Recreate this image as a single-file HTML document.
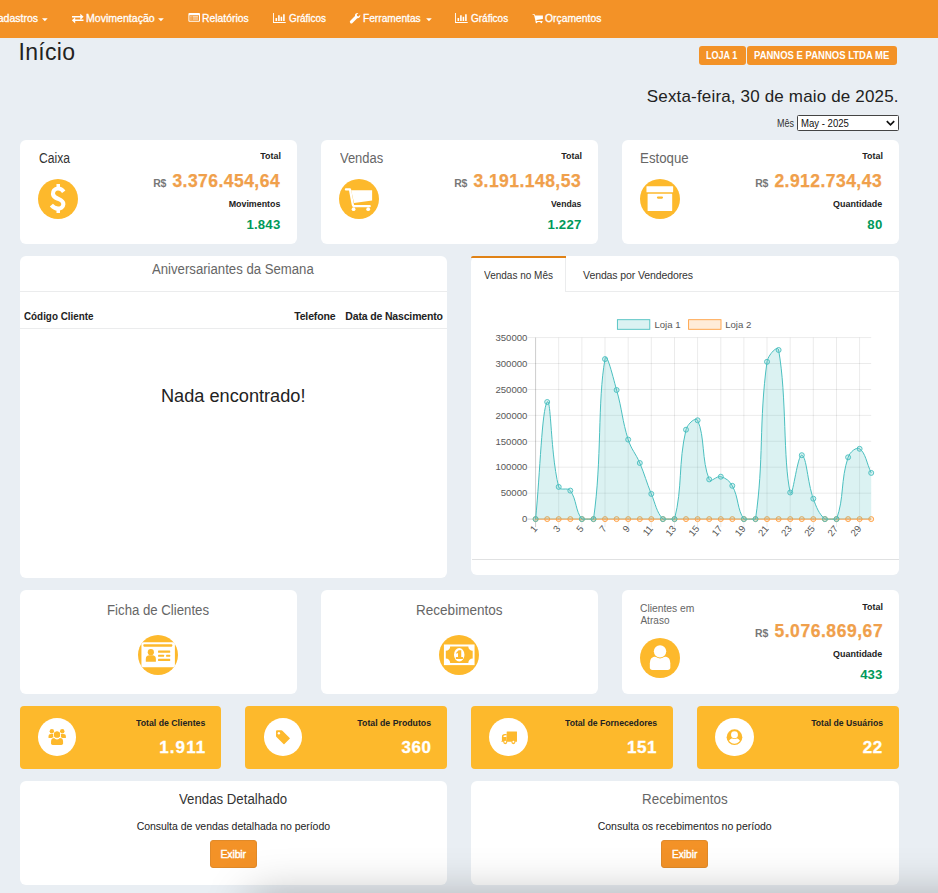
<!DOCTYPE html>
<html lang="pt-br">
<head>
<meta charset="utf-8">
<title>Início</title>
<style>
*{box-sizing:border-box;margin:0;padding:0}
html,body{width:938px;height:893px;overflow:hidden}
body{position:relative;background:#e9eef3;font-family:"Liberation Sans",sans-serif;color:#333}
.nav{position:absolute;left:0;top:0;width:938px;height:37.5px;background:#f39227}
.card{position:absolute;background:#fff;border-radius:6px}
.ycard{position:absolute;background:#fdb92c;border-radius:4px}
.circ{position:absolute;width:40.1px;height:40.1px;border-radius:50%;background:#fdb92c}
.wcirc{position:absolute;width:38.6px;height:38.3px;border-radius:50%;background:#fff}
.badge{position:absolute;top:46px;height:18.6px;background:#f39227;border-radius:3px}
.btn{position:absolute;top:840px;width:47.2px;height:28px;background:#f39227;border:1px solid #e08a2a;border-radius:3px}
.hr{position:absolute;height:1px;background:#ebeced}
.t{position:absolute;white-space:nowrap;line-height:1}
.sel{position:absolute;left:797px;top:115px;width:102px;height:16px;background:#fff;border:1px solid #444;border-radius:1.5px}
svg{position:absolute;overflow:visible}
</style>
</head>
<body>

<div class="nav"></div>
<div class="badge" style="left:699px;width:46.8px"></div>
<div class="badge" style="left:747px;width:150px"></div>
<div class="sel"></div>

<div class="card" style="left:20px;top:140px;width:277px;height:103.5px"></div>
<div class="card" style="left:321px;top:140px;width:277px;height:103.5px"></div>
<div class="card" style="left:622px;top:140px;width:277px;height:103.5px"></div>
<div class="circ" style="left:38px;top:178.9px"></div>
<div class="circ" style="left:339px;top:178.9px"></div>
<div class="circ" style="left:640px;top:178.9px"></div>

<div class="card" style="left:20px;top:256px;width:427px;height:322px"></div>
<div class="card" style="left:471px;top:256px;width:428px;height:318.5px"></div>

<div class="card" style="left:20px;top:590px;width:277px;height:103.5px"></div>
<div class="card" style="left:321px;top:590px;width:277px;height:103.5px"></div>
<div class="card" style="left:622px;top:590px;width:277px;height:103.5px"></div>
<div class="circ" style="left:138px;top:634.9px"></div>
<div class="circ" style="left:439px;top:634.9px"></div>
<div class="circ" style="left:640px;top:637.8px"></div>

<div class="ycard" style="left:20px;top:706px;width:201px;height:63px"></div>
<div class="ycard" style="left:245px;top:706px;width:202px;height:63px"></div>
<div class="ycard" style="left:471px;top:706px;width:202px;height:63px"></div>
<div class="ycard" style="left:697px;top:706px;width:202px;height:63px"></div>
<div class="wcirc" style="left:37.8px;top:717.8px"></div>
<div class="wcirc" style="left:263.8px;top:717.8px"></div>
<div class="wcirc" style="left:489.1px;top:717.8px"></div>
<div class="wcirc" style="left:715px;top:717.8px"></div>

<div class="card" style="left:20px;top:781px;width:427px;height:104px"></div>
<div class="card" style="left:471px;top:781px;width:428px;height:104px"></div>
<div class="btn" style="left:210px"></div>
<div class="btn" style="left:661px"></div>
<svg style="left:0;top:0" width="938" height="38" viewBox="0 0 938 38" fill="#fff"><path d="M42 18.3h5.7l-2.85 2.9zM158.1 18.3h5.7l-2.85 2.9zM426.1 18.3h5.7l-2.85 2.9z"/><path d="M72 16h8.3v-2.3l3.3 3.1-3.3 3.1v-2.3H72zM83.5 19.5h-8.3v-2.3l-3.3 3.1 3.3 3.1v-2.3h8.3z" transform="translate(0 0)"/><path d="M189.4 13.1h9.6q1 0 1 1v6.7q0 1-1 1h-9.6q-1 0-1-1v-6.7q0-1 1-1zm0 2.2v5.5h9.6v-5.5z" fill-rule="evenodd"/><path d="M190.3 16.2h1.3v1.2h-1.3zM192.6 16.2h5.5v1.2h-5.5zM190.3 18.4h1.3v1.2h-1.3zM192.6 18.4h5.5v1.2h-5.5z" opacity=".8"/><path d="M273.0 13.1h.9v8.9h11.8v.9H273.0z"/><path d="M275.5 18h1.6v2.9h-1.6zM278.1 15.3h1.6v5.6h-1.6zM280.6 16.8h1.6v4.1h-1.6zM283.1 14.3h1.6v6.6h-1.6z"/><path d="M455.0 13.1h.9v8.9h11.8v.9H455.0z"/><path d="M457.5 18h1.6v2.9h-1.6zM460.1 15.3h1.6v5.6h-1.6zM462.6 16.8h1.6v4.1h-1.6zM465.1 14.3h1.6v6.6h-1.6z"/><path transform="translate(355 18.2) scale(.84) translate(-355.9 -18.2)" d="M350.3 21.2l5.6-5.6a3.2 3.2 0 0 1 4-3.6l-2 2 .5 1.7 1.7.5 2-2a3.2 3.2 0 0 1-3.6 4l-5.6 5.6a1.3 1.3 0 0 1-2.6-2.6z"/><path d="M532.6 14.3h2.1l.5 1.1h7.7v3.7l-6.5.9.2.9h5.9v1h-6.8l-1.6-6.8h-1.5z"/><circle cx="536.5" cy="22.3" r=".9"/><circle cx="541.3" cy="22.3" r=".9"/></svg>
<svg style="left:28px;top:169px" width="60" height="60" viewBox="0 0 893 893"><path d="M532 338C505 302 472 289 445 290C395 292 368 330 372 372C376 418 420 432 452 445C495 462 528 480 526 525C524 570 485 592 445 590C405 588 375 570 348 538" fill="none" stroke="#fff" stroke-width="62"/><path d="M450 225V300M450 585V655" stroke="#fff" stroke-width="52"/></svg>
<svg style="left:329px;top:169px" width="60" height="60" viewBox="0 0 893 893"><path d="M252 304H312L356 538Q359 553 374 553H606" fill="none" stroke="#fff" stroke-width="34" stroke-linecap="round" stroke-linejoin="round"/><path d="M330 315H642V470L372 506Z" fill="#fff"/><circle cx="366" cy="598" r="28" fill="#fff"/><circle cx="583" cy="598" r="28" fill="#fff"/></svg>
<svg style="left:630px;top:169px" width="60" height="60" viewBox="0 0 893 893"><rect x="245" y="258" width="397" height="87" rx="8" fill="#fff"/><rect x="262" y="368" width="366" height="258" rx="10" fill="#fff"/><rect x="400" y="408" width="92" height="34" rx="17" fill="#fdb92c"/></svg>
<svg style="left:128px;top:625px" width="60" height="60" viewBox="0 0 893 893"><rect x="200" y="255" width="498" height="373" rx="30" fill="#fff"/><g fill="#fdb92c"><rect x="228" y="287" width="432" height="35" rx="12"/><circle cx="340" cy="405" r="46"/><path d="M265 548V505Q265 450 320 450H360Q415 450 415 505V548Z"/><rect x="447" y="380" width="181" height="32" rx="8"/><rect x="447" y="442" width="90" height="32" rx="8"/><rect x="567" y="442" width="61" height="32" rx="8"/><rect x="447" y="504" width="181" height="32" rx="8"/></g></svg>
<svg style="left:429px;top:625px" width="60" height="60" viewBox="0 0 893 893"><rect x="222" y="290" width="456" height="307" fill="#fff"/><path d="M315 320H585A65 65 0 0 0 650 385V500A65 65 0 0 0 585 565H315A65 65 0 0 0 250 500V385A65 65 0 0 0 315 320Z" fill="#fdb92c"/><ellipse cx="450" cy="442" rx="78" ry="100" fill="#fff"/><path d="M405 412L440 375H480V478H505V505H400V478H432V415L405 428Z" fill="#fdb92c"/></svg>
<svg style="left:630px;top:627px" width="60" height="60" viewBox="0 0 893 893"><path d="M295 600V540Q295 440 385 440H510Q600 440 600 540V600Q600 640 560 640H335Q295 640 295 600Z" fill="#fff"/><circle cx="447" cy="362" r="106" fill="#fdb92c"/><circle cx="447" cy="362" r="92" fill="#fff"/></svg>
<svg style="left:32px;top:712px" width="50" height="50" viewBox="0 0 893 893"><g fill="#fdb92c"><circle cx="355" cy="345" r="40"/><circle cx="540" cy="345" r="40"/><path d="M295 465V430Q295 392 335 392H385V465Z"/><path d="M605 465V430Q605 392 565 392H515V465Z"/></g><circle cx="447" cy="405" r="68" fill="#fff"/><circle cx="447" cy="405" r="55" fill="#fdb92c"/><path d="M328 590V520Q328 452 395 452H500Q567 452 567 520V590Z" fill="#fff"/><path d="M340 560V525Q340 465 400 465H495Q555 465 555 525V560Q555 590 525 590H370Q340 590 340 560Z" fill="#fdb92c"/><path d="M392 462A68 68 0 0 0 502 462Z" fill="#fff"/><circle cx="447" cy="405" r="55" fill="#fdb92c"/></svg>
<svg style="left:258px;top:712px" width="50" height="50" viewBox="0 0 893 893"><path d="M340 328H418Q428 328 436 336L566 463Q574 471 566 479L472 572Q464 580 456 572L330 446Q322 438 322 428V346Q322 328 340 328Z" fill="#fdb92c"/><circle cx="373" cy="380" r="21" fill="#fff"/></svg>
<svg style="left:484px;top:712px" width="50" height="50" viewBox="0 0 893 893"><g fill="#fdb92c"><rect x="405" y="348" width="184" height="184" rx="6"/><path d="M405 395H370Q320 395 320 445V515L305 530H405Z"/><circle cx="380" cy="538" r="36"/><circle cx="525" cy="538" r="36"/></g><path d="M345 447Q345 415 378 415H400V447Z" fill="#fff"/><circle cx="380" cy="532" r="18" fill="#fff"/><circle cx="525" cy="532" r="18" fill="#fff"/></svg>
<svg style="left:709px;top:712px" width="50" height="50" viewBox="0 0 893 893"><circle cx="455" cy="450" r="140" fill="#fdb92c"/><clipPath id="uc"><circle cx="455" cy="450" r="117"/></clipPath><g clip-path="url(#uc)"><ellipse cx="455" cy="545" rx="106" ry="82" fill="#fff"/><circle cx="455" cy="408" r="76" fill="#fdb92c"/></g><circle cx="455" cy="408" r="62" fill="#fff"/></svg>

<div class="hr" style="left:20px;top:291px;width:427px"></div>
<div class="hr" style="left:20px;top:328px;width:427px"></div>
<div class="hr" style="left:565px;top:291px;width:334px"></div>
<div class="hr" style="left:565px;top:256px;width:1px;height:36px"></div>
<div class="hr" style="left:472px;top:559px;width:427px;background:#e0e1e2"></div>
<div style="position:absolute;left:471px;top:256px;width:95px;height:2.3px;background:#e08216;border-radius:6px 0 0 0"></div>
<svg style="left:885.8px;top:120.2px" width="9" height="6.5" viewBox="0 0 9 6.5"><path d="M.8 1.2L4.5 4.9 8.2 1.2" fill="none" stroke="#111" stroke-width="1.7"/></svg>
<svg class="chart" style="left:0;top:0" width="938" height="893" viewBox="0 0 938 893" font-family="Liberation Sans, sans-serif">
<path d="M527.6 493.2H871.2M527.6 467.2H871.2M527.6 441.3H871.2M527.6 415.4H871.2M527.6 389.5H871.2M527.6 363.5H871.2M527.6 337.6H871.2M558.7 337.6V527.1M581.9 337.6V527.1M605.0 337.6V527.1M628.2 337.6V527.1M651.3 337.6V527.1M674.5 337.6V527.1M697.6 337.6V527.1M720.8 337.6V527.1M743.9 337.6V527.1M767.0 337.6V527.1M790.2 337.6V527.1M813.3 337.6V527.1M836.5 337.6V527.1M859.6 337.6V527.1" stroke="#000" stroke-opacity=".1" stroke-width=".8" fill="none"/>
<path d="M527.6 519.1H871.2M535.6 337.6V527.1" stroke="#000" stroke-opacity=".25" stroke-width=".8" fill="none"/>
<g font-size="9.6" fill="#585858" text-anchor="end">
<text x="527.4" y="522">0</text>
<text x="527.4" y="496">50000</text>
<text x="527.4" y="470">100000</text>
<text x="527.4" y="445">150000</text>
<text x="527.4" y="419">200000</text>
<text x="527.4" y="393">250000</text>
<text x="527.4" y="367">300000</text>
<text x="527.4" y="341">350000</text>
</g>
<g font-size="9.6" fill="#585858" text-anchor="end">
<text transform="translate(535.3 526.7) rotate(-50)" y="3.3">1</text>
<text transform="translate(558.4 526.7) rotate(-50)" y="3.3">3</text>
<text transform="translate(581.6 526.7) rotate(-50)" y="3.3">5</text>
<text transform="translate(604.7 526.7) rotate(-50)" y="3.3">7</text>
<text transform="translate(627.9 526.7) rotate(-50)" y="3.3">9</text>
<text transform="translate(651.0 526.7) rotate(-50)" y="3.3">11</text>
<text transform="translate(674.2 526.7) rotate(-50)" y="3.3">13</text>
<text transform="translate(697.3 526.7) rotate(-50)" y="3.3">15</text>
<text transform="translate(720.5 526.7) rotate(-50)" y="3.3">17</text>
<text transform="translate(743.6 526.7) rotate(-50)" y="3.3">19</text>
<text transform="translate(766.7 526.7) rotate(-50)" y="3.3">21</text>
<text transform="translate(789.9 526.7) rotate(-50)" y="3.3">23</text>
<text transform="translate(813.0 526.7) rotate(-50)" y="3.3">25</text>
<text transform="translate(836.2 526.7) rotate(-50)" y="3.3">27</text>
<text transform="translate(859.3 526.7) rotate(-50)" y="3.3">29</text>
</g>
<path d="M535.6 519.1H871.2" stroke="#ff9f40" stroke-width="1" fill="none"/>
<g fill="#ff9f40" fill-opacity=".2" stroke="#ff9f40" stroke-width=".9">
<circle cx="535.6" cy="519.1" r="2.5"/>
<circle cx="547.2" cy="519.1" r="2.5"/>
<circle cx="558.7" cy="519.1" r="2.5"/>
<circle cx="570.3" cy="519.1" r="2.5"/>
<circle cx="581.9" cy="519.1" r="2.5"/>
<circle cx="593.5" cy="519.1" r="2.5"/>
<circle cx="605.0" cy="519.1" r="2.5"/>
<circle cx="616.6" cy="519.1" r="2.5"/>
<circle cx="628.2" cy="519.1" r="2.5"/>
<circle cx="639.8" cy="519.1" r="2.5"/>
<circle cx="651.3" cy="519.1" r="2.5"/>
<circle cx="662.9" cy="519.1" r="2.5"/>
<circle cx="674.5" cy="519.1" r="2.5"/>
<circle cx="686.0" cy="519.1" r="2.5"/>
<circle cx="697.6" cy="519.1" r="2.5"/>
<circle cx="709.2" cy="519.1" r="2.5"/>
<circle cx="720.8" cy="519.1" r="2.5"/>
<circle cx="732.3" cy="519.1" r="2.5"/>
<circle cx="743.9" cy="519.1" r="2.5"/>
<circle cx="755.5" cy="519.1" r="2.5"/>
<circle cx="767.0" cy="519.1" r="2.5"/>
<circle cx="778.6" cy="519.1" r="2.5"/>
<circle cx="790.2" cy="519.1" r="2.5"/>
<circle cx="801.8" cy="519.1" r="2.5"/>
<circle cx="813.3" cy="519.1" r="2.5"/>
<circle cx="824.9" cy="519.1" r="2.5"/>
<circle cx="836.5" cy="519.1" r="2.5"/>
<circle cx="848.1" cy="519.1" r="2.5"/>
<circle cx="859.6" cy="519.1" r="2.5"/>
<circle cx="871.2" cy="519.1" r="2.5"/>
</g>
<path d="M535.6 519.1C540.2 472.3 541.8 409.5 547.2 402.0C551.1 396.6 550.6 455.8 558.7 486.9C559.9 491.3 567.7 487.0 570.3 490.6C576.9 499.9 575.2 510.8 581.9 519.1C584.4 519.1 592.8 519.1 593.5 519.1C602.1 459.4 597.4 401.9 605.0 359.1C606.6 350.3 613.0 377.3 616.6 390.0C622.2 409.5 622.1 420.3 628.2 439.6C631.3 449.5 635.7 453.4 639.8 463.0C644.9 475.1 646.3 481.7 651.3 493.9C655.6 504.1 656.4 512.0 662.9 519.1C665.6 519.1 673.4 519.1 674.5 519.1C682.7 487.4 678.1 463.6 686.0 429.7C687.4 424.1 695.8 416.4 697.6 420.3C705.0 436.2 701.5 460.5 709.2 479.4C710.7 483.1 716.6 475.5 720.8 476.7C725.9 478.1 729.6 480.8 732.3 485.8C738.9 497.8 736.9 509.1 743.9 519.1C746.2 519.1 754.8 519.1 755.5 519.1C764.1 460.5 758.7 423.0 767.0 361.8C767.9 355.3 777.7 344.5 778.6 350.0C786.9 396.8 782.9 459.5 790.2 492.5C792.2 501.6 797.5 454.1 801.8 455.2C806.7 456.5 807.3 481.9 813.3 498.7C816.5 507.5 818.7 513.6 824.9 519.1C828.0 519.1 835.0 519.1 836.5 519.1C844.3 498.2 840.5 480.2 848.1 457.3C849.8 452.1 856.4 446.6 859.6 448.8C865.6 452.8 866.6 463.3 871.2 472.9V519.1H535.6Z" fill="#4bc0c0" fill-opacity=".2"/>
<path d="M535.6 519.1C540.2 472.3 541.8 409.5 547.2 402.0C551.1 396.6 550.6 455.8 558.7 486.9C559.9 491.3 567.7 487.0 570.3 490.6C576.9 499.9 575.2 510.8 581.9 519.1C584.4 519.1 592.8 519.1 593.5 519.1C602.1 459.4 597.4 401.9 605.0 359.1C606.6 350.3 613.0 377.3 616.6 390.0C622.2 409.5 622.1 420.3 628.2 439.6C631.3 449.5 635.7 453.4 639.8 463.0C644.9 475.1 646.3 481.7 651.3 493.9C655.6 504.1 656.4 512.0 662.9 519.1C665.6 519.1 673.4 519.1 674.5 519.1C682.7 487.4 678.1 463.6 686.0 429.7C687.4 424.1 695.8 416.4 697.6 420.3C705.0 436.2 701.5 460.5 709.2 479.4C710.7 483.1 716.6 475.5 720.8 476.7C725.9 478.1 729.6 480.8 732.3 485.8C738.9 497.8 736.9 509.1 743.9 519.1C746.2 519.1 754.8 519.1 755.5 519.1C764.1 460.5 758.7 423.0 767.0 361.8C767.9 355.3 777.7 344.5 778.6 350.0C786.9 396.8 782.9 459.5 790.2 492.5C792.2 501.6 797.5 454.1 801.8 455.2C806.7 456.5 807.3 481.9 813.3 498.7C816.5 507.5 818.7 513.6 824.9 519.1C828.0 519.1 835.0 519.1 836.5 519.1C844.3 498.2 840.5 480.2 848.1 457.3C849.8 452.1 856.4 446.6 859.6 448.8C865.6 452.8 866.6 463.3 871.2 472.9" stroke="#4bc0c0" stroke-width="1" fill="none"/>
<g fill="#4bc0c0" fill-opacity=".2" stroke="#4bc0c0" stroke-width=".9">
<circle cx="535.6" cy="519.1" r="2.5"/>
<circle cx="547.2" cy="402.0" r="2.5"/>
<circle cx="558.7" cy="486.9" r="2.5"/>
<circle cx="570.3" cy="490.6" r="2.5"/>
<circle cx="581.9" cy="519.1" r="2.5"/>
<circle cx="593.5" cy="519.1" r="2.5"/>
<circle cx="605.0" cy="359.1" r="2.5"/>
<circle cx="616.6" cy="390.0" r="2.5"/>
<circle cx="628.2" cy="439.6" r="2.5"/>
<circle cx="639.8" cy="463.0" r="2.5"/>
<circle cx="651.3" cy="493.9" r="2.5"/>
<circle cx="662.9" cy="519.1" r="2.5"/>
<circle cx="674.5" cy="519.1" r="2.5"/>
<circle cx="686.0" cy="429.7" r="2.5"/>
<circle cx="697.6" cy="420.3" r="2.5"/>
<circle cx="709.2" cy="479.4" r="2.5"/>
<circle cx="720.8" cy="476.7" r="2.5"/>
<circle cx="732.3" cy="485.8" r="2.5"/>
<circle cx="743.9" cy="519.1" r="2.5"/>
<circle cx="755.5" cy="519.1" r="2.5"/>
<circle cx="767.0" cy="361.8" r="2.5"/>
<circle cx="778.6" cy="350.0" r="2.5"/>
<circle cx="790.2" cy="492.5" r="2.5"/>
<circle cx="801.8" cy="455.2" r="2.5"/>
<circle cx="813.3" cy="498.7" r="2.5"/>
<circle cx="824.9" cy="519.1" r="2.5"/>
<circle cx="836.5" cy="519.1" r="2.5"/>
<circle cx="848.1" cy="457.3" r="2.5"/>
<circle cx="859.6" cy="448.8" r="2.5"/>
<circle cx="871.2" cy="472.9" r="2.5"/>
</g>
<rect x="617.4" y="319.7" width="32.4" height="9.6" fill="#4bc0c0" fill-opacity=".2" stroke="#4bc0c0" stroke-width=".9"/>
<rect x="688.6" y="319.7" width="32.4" height="9.6" fill="#ff9f40" fill-opacity=".2" stroke="#ff9f40" stroke-width=".9"/>
<g font-size="9.6" fill="#585858"><text x="654.4" y="328">Loja 1</text><text x="725.2" y="328">Loja 2</text></g>
</svg>
<div style="position:absolute;left:265px;top:910px;width:760px;height:40px;box-shadow:0 0 46px 14px rgba(0,0,0,.29)"></div>

<!-- text -->
<span class="t" style="top:13px;font-size:11px;color:#fff;-webkit-text-stroke:0.3px;right:900.1px;transform-origin:50.63px 0;transform:scaleX(0.9598);">Cadastros</span>
<span class="t" style="top:13px;font-size:11px;color:#fff;-webkit-text-stroke:0.3px;left:85.7px;transform-origin:0px 0;transform:scaleX(0.9606);">Movimentação</span>
<span class="t" style="top:13px;font-size:11px;color:#fff;-webkit-text-stroke:0.3px;left:202.1px;transform-origin:0px 0;transform:scaleX(0.9416);">Relatórios</span>
<span class="t" style="top:13px;font-size:11px;color:#fff;-webkit-text-stroke:0.3px;left:288.6px;transform-origin:0px 0;transform:scaleX(0.9022);">Gráficos</span>
<span class="t" style="top:13px;font-size:11px;color:#fff;-webkit-text-stroke:0.3px;left:363.1px;transform-origin:0px 0;transform:scaleX(0.9244);">Ferramentas</span>
<span class="t" style="top:13px;font-size:11px;color:#fff;-webkit-text-stroke:0.3px;left:470.7px;transform-origin:0px 0;transform:scaleX(0.9070);">Gráficos</span>
<span class="t" style="top:13px;font-size:11px;color:#fff;-webkit-text-stroke:0.3px;left:545.2px;transform-origin:0px 0;transform:scaleX(0.9403);">Orçamentos</span>
<span class="t" style="top:41px;font-size:23px;color:#222;letter-spacing:0.284px;left:18.6px;">Início</span>
<span class="t" style="top:51px;font-size:10px;font-weight:700;color:#fff;left:706.4px;transform-origin:0px 0;transform:scaleX(0.9055);">LOJA 1</span>
<span class="t" style="top:51px;font-size:10px;font-weight:700;color:#fff;left:754px;transform-origin:0px 0;transform:scaleX(0.9503);">PANNOS E PANNOS LTDA ME</span>
<span class="t" style="top:88px;font-size:17px;color:#222;letter-spacing:0.163px;right:39.31px;">Sexta-feira, 30 de maio de 2025.</span>
<span class="t" style="top:119px;font-size:10px;left:776.8px;transform-origin:0px 0;transform:scaleX(0.9052);">Mês</span>
<span class="t" style="top:119px;font-size:10px;color:#111;left:801.2px;transform-origin:0px 0;transform:scaleX(0.9571);">May - 2025</span>
<span class="t" style="top:151px;font-size:14px;left:38.8px;transform-origin:0px 0;transform:scaleX(0.8665);">Caixa</span>
<span class="t" style="top:151px;font-size:9.5px;font-weight:700;color:#222;right:657.06px;transform-origin:21.35px 0;transform:scaleX(0.9369);">Total</span>
<span class="t" style="top:178px;font-size:10.5px;font-weight:700;color:#777;letter-spacing:-0.283px;left:153.3px;">R$</span>
<span class="t" style="top:173px;font-size:17.5px;font-weight:700;color:#f0a04b;letter-spacing:0.459px;-webkit-text-stroke:0.25px;right:657.91px;">3.376.454,64</span>
<span class="t" style="top:199px;font-size:9.5px;font-weight:700;color:#222;right:657.42px;transform-origin:55.14px 0;transform:scaleX(0.9340);">Movimentos</span>
<span class="t" style="top:218px;font-size:13.2px;font-weight:700;color:#00995a;letter-spacing:0.208px;right:657.56px;">1.843</span>
<span class="t" style="top:151px;font-size:14px;color:#666;left:339.8px;transform-origin:0px 0;transform:scaleX(0.9249);">Vendas</span>
<span class="t" style="top:151px;font-size:9.5px;font-weight:700;color:#222;right:356.06px;transform-origin:21.35px 0;transform:scaleX(0.9369);">Total</span>
<span class="t" style="top:178px;font-size:10.5px;font-weight:700;color:#777;letter-spacing:-0.283px;left:454.3px;">R$</span>
<span class="t" style="top:173px;font-size:17.5px;font-weight:700;color:#f0a04b;letter-spacing:0.459px;-webkit-text-stroke:0.25px;right:356.91px;">3.191.148,53</span>
<span class="t" style="top:199px;font-size:9.5px;font-weight:700;color:#222;right:356.42px;transform-origin:32.99px 0;transform:scaleX(0.9065);">Vendas</span>
<span class="t" style="top:218px;font-size:13.2px;font-weight:700;color:#00995a;letter-spacing:0.183px;right:356.58px;">1.227</span>
<span class="t" style="top:151px;font-size:14px;color:#666;left:639.8px;transform-origin:1px 0;transform:scaleX(0.9449);">Estoque</span>
<span class="t" style="top:151px;font-size:9.5px;font-weight:700;color:#222;right:55.06px;transform-origin:21.35px 0;transform:scaleX(0.9369);">Total</span>
<span class="t" style="top:178px;font-size:10.5px;font-weight:700;color:#777;letter-spacing:-0.283px;left:755.3px;">R$</span>
<span class="t" style="top:173px;font-size:17.5px;font-weight:700;color:#f0a04b;letter-spacing:0.459px;-webkit-text-stroke:0.25px;right:55.91px;">2.912.734,43</span>
<span class="t" style="top:199px;font-size:9.5px;font-weight:700;color:#222;right:55.42px;transform-origin:51.97px 0;transform:scaleX(0.9409);">Quantidade</span>
<span class="t" style="top:218px;font-size:13.2px;font-weight:700;color:#00995a;letter-spacing:0.266px;right:55.5px;">80</span>
<span class="t" style="top:262px;font-size:14px;color:#666;left:152.2px;transform-origin:0px 0;transform:scaleX(0.9402);">Aniversariantes da Semana</span>
<span class="t" style="top:311px;font-size:10.5px;font-weight:700;color:#222;left:24px;transform-origin:0px 0;transform:scaleX(0.9375);">Código Cliente</span>
<span class="t" style="top:311px;font-size:10.5px;font-weight:700;color:#222;letter-spacing:-0.151px;left:294.2px;">Telefone</span>
<span class="t" style="top:311px;font-size:10.5px;font-weight:700;color:#222;letter-spacing:-0.156px;left:345.3px;">Data de Nascimento</span>
<span class="t" style="top:388px;font-size:17.5px;color:#222;left:160.9px;transform-origin:1px 0;transform:scaleX(1.0389);">Nada encontrado!</span>
<span class="t" style="top:270px;font-size:10.5px;left:483.8px;transform-origin:0px 0;transform:scaleX(0.9538);">Vendas no Mês</span>
<span class="t" style="top:270px;font-size:10.5px;letter-spacing:-0.107px;left:583.1px;">Vendas por Vendedores</span>
<span class="t" style="top:603px;font-size:14px;color:#666;left:106.5px;transform-origin:1px 0;transform:scaleX(0.9425);">Ficha de Clientes</span>
<span class="t" style="top:603px;font-size:14px;color:#666;left:415.5px;transform-origin:1px 0;transform:scaleX(0.9662);">Recebimentos</span>
<span class="t" style="top:604px;font-size:10px;color:#666;left:640.4px;transform-origin:0px 0;transform:scaleX(1.0311);">Clientes em</span>
<span class="t" style="top:616px;font-size:10px;color:#666;letter-spacing:0.052px;left:640.4px;">Atraso</span>
<span class="t" style="top:602px;font-size:9.5px;font-weight:700;color:#222;right:55.06px;transform-origin:21.35px 0;transform:scaleX(0.9369);">Total</span>
<span class="t" style="top:628px;font-size:10.5px;font-weight:700;color:#777;letter-spacing:-0.283px;left:755.1px;">R$</span>
<span class="t" style="top:623px;font-size:17.5px;font-weight:700;color:#f0a04b;letter-spacing:0.550px;-webkit-text-stroke:0.25px;right:54.82px;">5.076.869,67</span>
<span class="t" style="top:649px;font-size:9.5px;font-weight:700;color:#222;right:55.42px;transform-origin:51.97px 0;transform:scaleX(0.9409);">Quantidade</span>
<span class="t" style="top:668px;font-size:13.2px;font-weight:700;color:#00995a;letter-spacing:0.016px;right:55.75px;">433</span>
<span class="t" style="top:718px;font-size:9.5px;font-weight:700;color:#222;right:732.42px;transform-origin:75.03px 0;transform:scaleX(0.9197);">Total de Clientes</span>
<span class="t" style="top:739px;font-size:17px;font-weight:700;color:#fff;letter-spacing:1.113px;-webkit-text-stroke:0.3px;right:731.63px;">1.911</span>
<span class="t" style="top:718px;font-size:9.5px;font-weight:700;color:#222;right:506.82px;transform-origin:79.76px 0;transform:scaleX(0.9202);">Total de Produtos</span>
<span class="t" style="top:739px;font-size:17px;font-weight:700;color:#fff;letter-spacing:0.545px;-webkit-text-stroke:0.3px;right:506.6px;">360</span>
<span class="t" style="top:718px;font-size:9.5px;font-weight:700;color:#222;right:281.12px;transform-origin:100.9px 0;transform:scaleX(0.9108);">Total de Fornecedores</span>
<span class="t" style="top:739px;font-size:17px;font-weight:700;color:#fff;letter-spacing:0.645px;-webkit-text-stroke:0.3px;right:280.8px;">151</span>
<span class="t" style="top:718px;font-size:9.5px;font-weight:700;color:#222;right:55.42px;transform-origin:78.72px 0;transform:scaleX(0.9083);">Total de Usuários</span>
<span class="t" style="top:739px;font-size:17px;font-weight:700;color:#fff;letter-spacing:0.545px;-webkit-text-stroke:0.3px;right:55.2px;">22</span>
<span class="t" style="top:792px;font-size:14px;left:178.9px;transform-origin:0px 0;transform:scaleX(0.9447);">Vendas Detalhado</span>
<span class="t" style="top:821px;font-size:10.5px;color:#222;letter-spacing:-0.043px;left:136.7px;">Consulta de vendas detalhada no período</span>
<span class="t" style="top:849px;font-size:10.5px;color:#fff;letter-spacing:-0.152px;-webkit-text-stroke:0.4px;left:220.5px;">Exibir</span>
<span class="t" style="top:792px;font-size:14px;color:#666;left:641.6px;transform-origin:1px 0;transform:scaleX(0.9560);">Recebimentos</span>
<span class="t" style="top:821px;font-size:10.5px;color:#222;letter-spacing:-0.017px;left:597.7px;">Consulta os recebimentos no período</span>
<span class="t" style="top:849px;font-size:10.5px;color:#fff;-webkit-text-stroke:0.4px;left:672px;transform-origin:0px 0;transform:scaleX(0.9642);">Exibir</span>
</body>
</html>
